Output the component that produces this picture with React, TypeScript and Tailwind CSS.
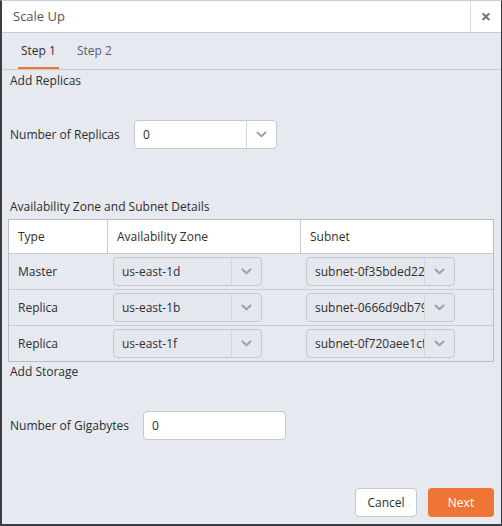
import React from 'react';

const rows = [
  { type: 'Master', zone: 'us-east-1d', subnet: 'subnet-0f35bded22c4a1b7e' },
  { type: 'Replica', zone: 'us-east-1b', subnet: 'subnet-0666d9db79a2c3f10' },
  { type: 'Replica', zone: 'us-east-1f', subnet: 'subnet-0f720aee1cf4b8d21' },
];

const Chevron: React.FC = () => (
  <svg width="11" height="7" viewBox="0 0 11 7" fill="none">
    <path d="M1.5 1.5 L5.5 5.2 L9.5 1.5" stroke="#9ba0aa" strokeWidth="2" strokeLinecap="round" strokeLinejoin="round" />
  </svg>
);

interface SelectProps {
  value: string;
  light?: boolean;
}

const FakeSelect: React.FC<SelectProps> = ({ value, light }) => (
  <div
    className={`flex h-[29px] items-stretch rounded border border-[#c4c8d0] ${light ? 'bg-white' : 'bg-[#e4e7ee]'}`}
  >
    <span className="flex-1 overflow-hidden whitespace-nowrap pl-[8px] leading-[27px]">{value}</span>
    <span className="flex w-[30px] shrink-0 items-center justify-center border-l border-[#d2d5dc]">
      <Chevron />
    </span>
  </div>
);

const App: React.FC = () => {
  return (
    <div
      className="flex h-[526px] w-[502px] flex-col overflow-hidden border-b-2 border-l-2 border-r border-t border-b-[#3b3d42] border-l-[#3b3d42] border-r-[#3b3d42] border-t-[#c9ccd3] bg-[#e6e9f0] text-[12px] text-[#2e2e2e]"
      style={{ fontFamily: '"Open Sans", "Liberation Sans", sans-serif' }}
    >
      {/* title bar */}
      <div className="flex h-[32px] shrink-0 items-stretch border-b border-[#c6cad2] bg-white">
        <div className="flex-1 pl-[11px] text-[13px] leading-[31px] text-[#555]">Scale Up</div>
        <div className="flex w-[31px] items-center justify-center border-l border-[#d6d9df] text-[18px] font-bold text-[#6e7480]">
          ×
        </div>
      </div>

      {/* tabs */}
      <div className="flex h-[37px] shrink-0 items-end border-b border-[#c6cad2] pl-[16px]">
        <div className="border-b-2 border-[#ee7533] px-[3px] pb-[7px] text-[12px] text-[#2e2e2e]">Step 1</div>
        <div className="ml-[15px] px-[3px] pb-[9px] text-[12px] text-[#5a6170]">Step 2</div>
      </div>

      <div className="flex flex-1 flex-col px-[6px]">
        <div className="ml-[2px] mt-[3px] leading-[16px]">Add Replicas</div>

        <div className="ml-[2px] mt-[31px] flex items-center">
          <span className="w-[124px]">Number of Replicas</span>
          <div className="w-[143px]">
            <FakeSelect value="0" light />
          </div>
        </div>

        <div className="ml-[2px] mt-[50px] leading-[16px]">Availability Zone and Subnet Details</div>

        <div className="mt-[4px] w-[486px] border border-[#b9bdc5]">
          <div className="flex h-[33px] bg-white">
            <div className="w-[99px] border-r border-[#c6cad2] pl-[9px] leading-[33px]">Type</div>
            <div className="w-[193px] border-r border-[#c6cad2] pl-[9px] leading-[33px]">Availability Zone</div>
            <div className="flex-1 pl-[9px] leading-[33px]">Subnet</div>
          </div>
          {rows.map((r) => (
            <div key={r.subnet} className="flex h-[36px] items-center border-t border-[#c6cad2]">
              <div className="w-[99px] pl-[9px]">{r.type}</div>
              <div className="w-[193px] pl-[5px]">
                <div className="w-[149px]">
                  <FakeSelect value={r.zone} />
                </div>
              </div>
              <div className="flex-1 pl-[5px]">
                <div className="w-[149px]">
                  <FakeSelect value={r.subnet} />
                </div>
              </div>
            </div>
          ))}
        </div>

        <div className="ml-[2px] mt-[2px] leading-[16px]">Add Storage</div>

        <div className="ml-[2px] mt-[31px] flex items-center">
          <span className="w-[133px]">Number of Gigabytes</span>
          <div className="h-[29px] w-[143px] rounded border border-[#c4c8d0] bg-white pl-[8px] leading-[27px]">0</div>
        </div>

        <div className="mt-auto mb-[7px] flex justify-end gap-[11px] pr-[1px]">
          <button className="h-[29px] w-[62px] rounded border border-[#c4c8d0] bg-white text-[12px] text-[#2e2e2e]">
            Cancel
          </button>
          <button className="h-[29px] w-[66px] rounded bg-[#ee7533] text-[12px] text-white">Next</button>
        </div>
      </div>
    </div>
  );
};

export default App;
